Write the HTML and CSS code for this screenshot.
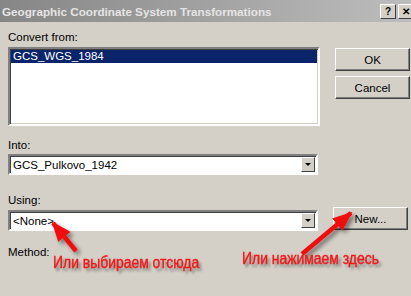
FILE: index.html
```html
<!DOCTYPE html>
<html lang="en">
<head>
  <meta charset="UTF-8">
  <title>Geographic Coordinate System Transformations</title>
  <link rel="stylesheet" href="styles.css">
</head>
<body>
<div class="window">
  <div class="titlebar">
    <span class="title">Geographic Coordinate System Transformations</span>
    <div class="title-buttons">
      <span class="tbtn">?</span>
      <span class="tbtn">&#x2715;</span>
    </div>
  </div>

  <div class="dialog">
    <div class="label">Convert from:</div>
    <div class="row">
      <div class="listbox">
        <div class="item selected">GCS_WGS_1984</div>
      </div>
      <div class="buttons">
        <button class="btn">OK</button>
        <button class="btn">Cancel</button>
      </div>
    </div>

    <div class="label into">Into:</div>
    <div class="combo">
      <span class="combo-text">GCS_Pulkovo_1942</span>
      <span class="combo-arrow"><span class="tri"></span></span>
    </div>

    <div class="label using">Using:</div>
    <div class="row using-row">
      <div class="combo">
        <span class="combo-text">&lt;None&gt;</span>
        <span class="combo-arrow"><span class="tri"></span></span>
      </div>
      <div class="buttons">
        <button class="btn">New...</button>
      </div>
    </div>

    <div class="label method">Method:</div>
  </div>

  <!-- annotations drawn on top of the screenshot -->
  <svg class="arrows" width="411" height="296" viewBox="0 0 411 296">
    <defs>
      <marker id="head" markerUnits="userSpaceOnUse" markerWidth="20" markerHeight="16" refX="18" refY="8" orient="auto">
        <path d="M0,0 L20,8 L0,16 Z" fill="#f01010"/>
      </marker>
      <filter id="shadow" x="-20%" y="-20%" width="160%" height="160%">
        <feDropShadow dx="3" dy="3" stdDeviation="2" flood-color="#000" flood-opacity="0.45"/>
      </filter>
    </defs>
    <g filter="url(#shadow)">
      <line x1="76" y1="251" x2="53" y2="223" stroke="#f01010" stroke-width="4.5" marker-end="url(#head)"/>
      <line x1="302" y1="254" x2="351" y2="213" stroke="#f01010" stroke-width="4.5" marker-end="url(#head)"/>
    </g>
  </svg>
  <div class="note note-left">Или выбираем отсюда</div>
  <div class="note note-right">Или нажимаем здесь</div>
</div>
</body>
</html>
```

FILE: styles.css
```css
body { margin: 0; background: #d4d0c8; font-family: "Liberation Sans", Arial, sans-serif; font-size: 11.5px; color: #000; }
.window { position: relative; width: 411px; height: 296px; overflow: hidden; background: #d4d0c8; }

.titlebar { height: 22px; display: flex; align-items: center; justify-content: space-between; padding-left: 2px; background: linear-gradient(to right, #868686, #bdbdbd); }
.title { color: #e4e4e4; font-weight: bold; font-size: 11.7px; }
.title-buttons { display: flex; gap: 2px; margin-right: -3px; }
.tbtn { width: 14px; height: 13px; background: #d4d0c8; border: 1px solid; border-color: #fff #404040 #404040 #fff; font-size: 10px; font-weight: bold; line-height: 13px; text-align: center; }

.dialog { padding: 8px 0 0 8px; }
.label { height: 14px; line-height: 14px; margin-bottom: 3px; }
.row { display: flex; align-items: flex-start; }
.buttons { display: flex; flex-direction: column; gap: 5px; margin-left: 15px; padding-top: 1px; }

.listbox { width: 306px; height: 73px; background: #fff; border: 2px solid; border-color: #808080 #fff #fff #808080; box-shadow: inset 1px 1px 0 #404040, inset -1px -1px 0 #d4d0c8; padding: 1px; }
.item { height: 13px; line-height: 13px; padding-left: 2px; }
.selected { background: #0a246a; color: #fff; }

.btn { width: 75px; height: 23px; font-family: inherit; font-size: 11.5px; color: #000; background: #d4d0c8; border: 1px solid; border-color: #fff #404040 #404040 #fff; box-shadow: inset -1px -1px 0 #808080; padding: 0; }

.into { margin-top: 12px; margin-bottom: 2px; }
.using { margin-top: 18px; }
.method { margin-top: 14px; }

.combo { width: 306px; height: 17px; display: flex; align-items: center; justify-content: space-between; background: #fff; border: 2px solid; border-color: #808080 #fff #fff #808080; box-shadow: inset 1px 1px 0 #404040; }
.combo-text { padding-left: 3px; }
.combo-arrow { width: 14px; height: 15px; margin-right: 1px; display: flex; align-items: center; justify-content: center; background: #d4d0c8; border: 1px solid; border-color: #fff #404040 #404040 #fff; box-sizing: border-box; }
.tri { width: 0; height: 0; border-left: 3px solid transparent; border-right: 3px solid transparent; border-top: 3px solid #000; }

.using-row { align-items: center; }
.using-row .buttons { padding-top: 0; margin-top: -4px; }

.arrows { position: absolute; left: 0; top: 0; pointer-events: none; }
.note { position: absolute; color: #f01818; font-size: 16px; text-shadow: 3px 3px 3px rgba(0, 0, 0, 0.45); white-space: nowrap; transform: scaleX(0.87); transform-origin: left top; -webkit-text-stroke: 0.4px #f01818; }
.note-left { left: 53px; top: 254px; }
.note-right { left: 242px; top: 250px; }
```
